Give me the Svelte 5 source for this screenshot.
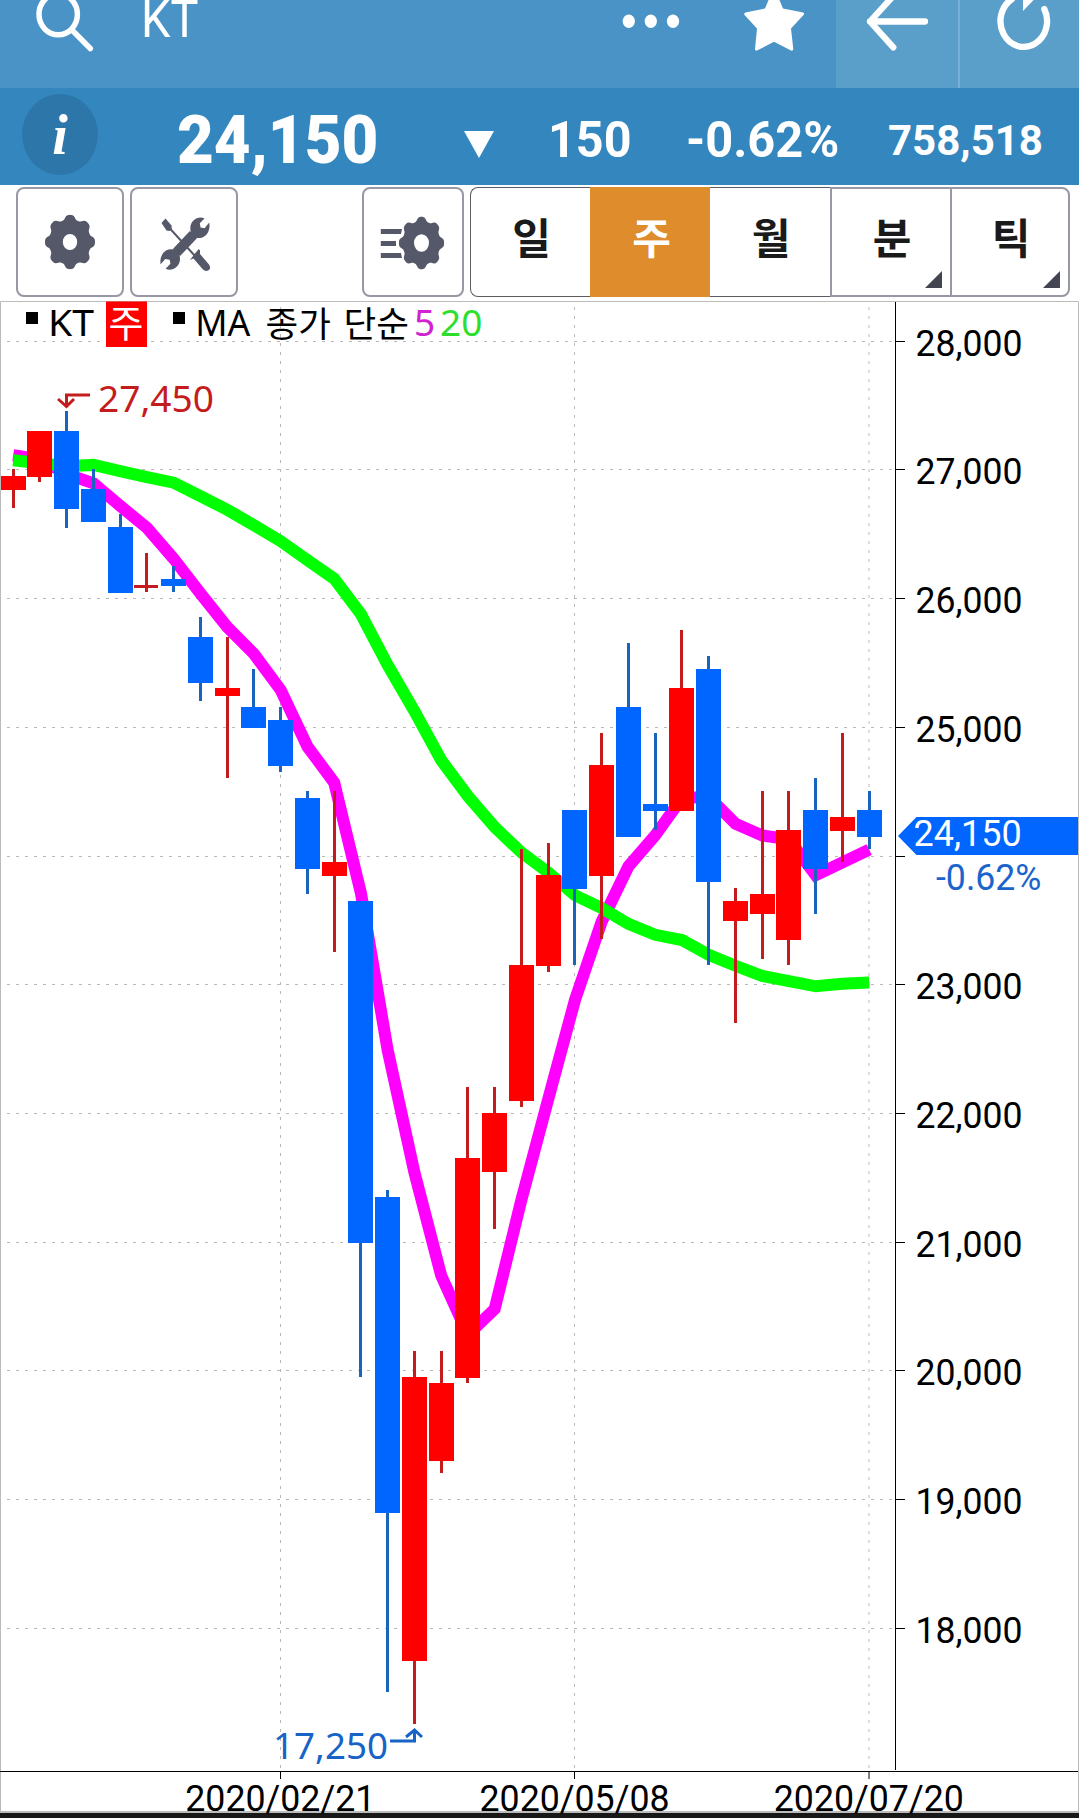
<script>
  // [open, high, low, close]
  const candles = [
    [26850, 27000, 26700, 26950],
    [26950, 27300, 26900, 27300],
    [27300, 27450, 26550, 26700],
    [26850, 27000, 26600, 26600],
    [26550, 26650, 26050, 26050],
    [26100, 26350, 26050, 26100],
    [26150, 26250, 26050, 26100],
    [25700, 25850, 25200, 25350],
    [25250, 25700, 24600, 25300],
    [25150, 25450, 25000, 25000],
    [25050, 25150, 24650, 24700],
    [24450, 24500, 23700, 23900],
    [23850, 24500, 23250, 23950],
    [23650, 23650, 19950, 21000],
    [21350, 21400, 17500, 18900],
    [17750, 20150, 17250, 19950],
    [19300, 20150, 19200, 19900],
    [19950, 22200, 19900, 21650],
    [21550, 22200, 21100, 22000],
    [22100, 24050, 22050, 23150],
    [23150, 24100, 23100, 23850],
    [24350, 24350, 23150, 23750],
    [23850, 24950, 23350, 24700],
    [25150, 25650, 24150, 24150],
    [24400, 24950, 24200, 24350],
    [24350, 25750, 24350, 25300],
    [25450, 25550, 23150, 23800],
    [23500, 23750, 22700, 23650],
    [23550, 24500, 23200, 23700],
    [23350, 24500, 23150, 24200],
    [24350, 24600, 23550, 23900],
    [24200, 24950, 23950, 24300],
    [24350, 24500, 24050, 24150],
  ];

  // averages that depend on weeks before the first visible candle
  const ma5Head = [27114, 27083, 26967, 26897];
  const ma20Head = [
    27075, 27052, 27029, 27039, 26990, 26943, 26901, 26796, 26691, 26570,
    26446, 26298, 26155, 25879, 25483, 25125, 24744, 24465, 24224,
  ];

  const prices = [28000, 27000, 26000, 25000, 24000, 23000, 22000, 21000, 20000, 19000, 18000];
  const dates = [
    { label: '2020/02/21', i: 10 },
    { label: '2020/05/08', i: 21 },
    { label: '2020/07/20', i: 32 },
  ];

  const tabs = [
    { name: '일' },
    { name: '주', active: true },
    { name: '월' },
    { name: '분', more: true },
    { name: '틱', more: true },
  ];

  const x = (i) => 13.2 + i * 26.75;
  const y = (p) => 341.2 + (28000 - p) * 0.1287;

  const average = (n, head) =>
    candles
      .map((_, i) => {
        if (i < head.length) return head[i];
        const part = candles.slice(i - n + 1, i + 1);
        return part.reduce((sum, c) => sum + c[3], 0) / n;
      })
      .map((p, i) => `${x(i)},${y(p).toFixed(1)}`)
      .join(' ');

  const ma5 = average(5, ma5Head);
  const ma20 = average(20, ma20Head);

  const bars = candles.map(([open, high, low, close], i) => {
    const top = Math.round(y(Math.max(open, close)) - 0.5);
    const bottom = Math.round(y(Math.min(open, close)) + 0.5);
    const left = Math.round(x(i) - 12.5);
    return {
      left,
      top,
      up: close >= open,
      doji: open === close,
      height: Math.max(3, bottom - top),
      high: Math.round(y(high) - 0.5),
      low: Math.round(y(low) - 0.3),
    };
  });

  function gear(cx, cy, rx, ry) {
    const pts = [];
    for (let a = 0; a < 360; a += 3) {
      const t = (a * Math.PI) / 180;
      const r = 0.915 + 0.085 * Math.tanh(1.6 * Math.cos(8 * t) + 0.2) / 0.947;
      pts.push(`${(cx + rx * r * Math.cos(t)).toFixed(2)} ${(cy + ry * r * Math.sin(t)).toFixed(2)}`);
    }
    return `M${pts.join('L')}Z`;
  }

  function hole(cx, cy, rx, ry) {
    return `M${cx - rx} ${cy}a${rx} ${ry} 0 1 0 ${rx * 2} 0a${rx} ${ry} 0 1 0 ${-rx * 2} 0Z`;
  }
</script>

<div class="app">
  <header>
    <svg class="search" viewBox="0 0 120 88" width="120" height="88">
      <ellipse cx="58.2" cy="14.3" rx="19.2" ry="20.5" />
      <path d="M73 31L90.3 48.5" />
    </svg>
    <h1>KT</h1>
    <svg class="actions" viewBox="600 0 236 88" width="236" height="88">
      <ellipse cx="628.8" cy="21.3" rx="6.1" ry="6.7" />
      <ellipse cx="650.8" cy="21.3" rx="6.1" ry="6.7" />
      <ellipse cx="673" cy="21.3" rx="6.1" ry="6.7" />
      <path
        d="M774 -13L783 8.5L803 12.5Q805 13.5 803.5 15L791 28.5L793.3 49Q793 51.5 790.5 50.3L774 41.8L757.5 50.3Q755 51.5 755 49L757 28.5L744.5 15Q743.5 13.5 745.5 12.5L765 8.5Z"
      />
    </svg>
    <div class="nav">
      <svg viewBox="836 0 122 88" width="122" height="88">
        <path d="M896 -7L870 21.5L893.3 47.3M870 21.5H925" />
      </svg>
      <svg viewBox="960 0 119 88" width="119" height="88">
        <path d="M1044.3 9A23.3 25.7 0 1 1 1012 -1" />
        <path class="solid" d="M1023 -4V11L1036 -2.5Z" />
      </svg>
    </div>
  </header>

  <div class="quote">
    <div class="info"><span>i</span></div>
    <strong class="price">24,150</strong>
    <svg class="down" viewBox="0 0 30 27" width="30" height="27"><path d="M0 0H30L15 27Z" /></svg>
    <span class="change">150</span>
    <span class="rate">-0.62%</span>
    <span class="volume">758,518</span>
  </div>

  <div class="toolbar">
    <button class="tool" aria-label="settings">
      <svg viewBox="16 187 108 110" width="108" height="110">
        <path fill-rule="evenodd" d={gear(70, 242, 25, 27.2) + hole(70, 242, 7.2, 8)} />
      </svg>
    </button>
    <button class="tool" aria-label="tools">
      <svg viewBox="130 187 108 110" width="108" height="110">
        <path d="M165.5 218.5L171.5 225.5L171.8 229.5L169.5 231L166.5 230.5L161.5 223Z" />
        <path class="shaft" d="M169 227.5L195 256" />
        <path d="M190 260L194.5 254L198.8 249L200 250.5L200 254L209 264.5Q211.5 268.5 208.5 270.2Q205.5 272 202.5 269L193.5 258.5Z" />
        <path class="wrench" d="M176.5 252.5L193.5 234.5" />
        <path d="M204.5 218.5C198 215.5 190.5 220.5 190.3 228C190 235 195 238.5 200 238C207 237.5 210.8 229.5 209.2 222.5L204.6 228.2L200.5 227.5L199.8 223.3Z" />
        <path d="M165.6 268.8C172 271.8 179.8 266.8 180 259.2C180.2 252 175.3 248.8 170.2 249.3C163.2 250 159.3 257.2 160.6 264.2L165.3 258.9L169.7 259.8L170.4 263.8Z" />
      </svg>
    </button>
    <button class="tool list" aria-label="indicators">
      <svg viewBox="362 187 102 110" width="102" height="110">
        <path d="M380.8 229H402L401 234H380.8ZM380.8 241H396V246H380.8ZM380.8 253H401L402 258H380.8Z" />
        <path fill-rule="evenodd" d={gear(421.5, 243, 22.6, 26.2) + hole(421.5, 243, 7.5, 8.7)} />
      </svg>
    </button>
    <div class="tabs">
      {#each tabs as { name, active, more }}
        <button class:active class:more>{name}</button>
      {/each}
    </div>
  </div>

  <svg class="chart" viewBox="0 301 1079 1510" width="1079" height="1510">
    <path class="frame" d="M0.5 1811V301.5H1078.5V1811" />

    <g class="grid">
      {#each prices as p}
        <path d="M7 {Math.floor(y(p)) + 0.5}H895" />
      {/each}
      {#each dates as { i }}
        {#if i === 32}
          <path class="last" d="M869 307V1771" />
        {:else}
          <path d="M{Math.floor(x(i)) + 0.5} 307V1771" />
        {/if}
      {/each}
    </g>

    <polyline class="ma ma5" points={ma5} />
    <polyline class="ma ma20" points={ma20} />

    {#each bars as b}
      <g class={b.up ? 'up' : 'down'}>
        <rect class="wick" x={b.left + 11} y={b.high} width="3" height={b.low - b.high} />
        <rect class:wick={b.doji} x={b.left} y={b.top} width={b.doji ? 24 : 25} height={b.height} />
      </g>
    {/each}

    <g class="mark high">
      <path d="M66.5 406V395H90M58 399L66.5 406.5L74 399" />
      <text x="98" y="412" textLength="116" lengthAdjust="spacingAndGlyphs">27,450</text>
    </g>
    <g class="mark low">
      <path d="M390 1741H414.5V1731M406 1737L414.5 1730L422 1737" />
      <text x="273" y="1758.5" textLength="115" lengthAdjust="spacingAndGlyphs">17,250</text>
    </g>

    <g class="axis">
      <path d="M895.5 302V1770M0 1771.5H1078" />
      {#each prices as p}
        {#if p !== 24000}
          <text x="915.5" y={Math.floor(y(p)) + 15} textLength="107" lengthAdjust="spacingAndGlyphs">{p.toLocaleString('en-US')}</text>
        {/if}
        <path d="M896 {Math.floor(y(p)) + 0.5}H905" />
      {/each}
      {#each dates as { label, i }}
        <path class:soft={i === 32} d="M{i === 32 ? 869 : Math.floor(x(i)) + 0.5} 1772V1779" />
        <text x={x(i) - 95.4} y="1810.7" textLength="190" lengthAdjust="spacingAndGlyphs">{label}</text>
      {/each}
    </g>

    <g class="last-price">
      <path d="M898 836L916.5 817H1078V855H916.5Z" />
      <text x="913.6" y="846" textLength="108" lengthAdjust="spacingAndGlyphs">24,150</text>
      <text class="pct" x="936" y="890" textLength="105.5" lengthAdjust="spacingAndGlyphs">-0.62%</text>
    </g>

    <g class="legend">
      <path d="M26 312H38V324H26ZM173 312H185V324H173Z" />
      <text x="48" y="336" textLength="46" lengthAdjust="spacingAndGlyphs">KT</text>
      <rect x="106" y="301.5" width="41" height="45.5" />
      <text class="period" x="108.5" y="336.5">주</text>
      <text x="195.3" y="336" textLength="55" lengthAdjust="spacingAndGlyphs">MA</text>
      <text class="ko" x="265.5" y="337">종가</text>
      <text class="ko" x="343.5" y="337">단순</text>
      <text class="five" x="414" y="336">5</text>
      <text class="twenty" x="440" y="336">20</text>
    </g>
  </svg>
  <footer></footer>
</div>

<style>
  :global(body) {
    margin: 0;
    background: #fff;
  }
  .app {
    width: 1079px;
    height: 1818px;
    overflow: hidden;
    font-family: Roboto, 'Noto Sans CJK KR', sans-serif;
  }
  svg {
    display: block;
  }

  header {
    display: flex;
    height: 88px;
    background: #4a93c6;
  }
  header svg {
    fill: #fff;
  }
  .search {
    fill: none;
    stroke: #fff;
    stroke-width: 5.5;
    stroke-linecap: round;
  }
  h1 {
    flex: 1;
    margin: 0;
    padding-left: 21px;
    font-size: 51px;
    font-weight: 400;
    line-height: 40px;
    color: #fff;
    transform: scaleX(0.92);
    transform-origin: 21px 0;
  }
  .nav {
    display: flex;
    gap: 2px;
    background: #78b1d8;
  }
  .nav svg {
    background: #5a9fca;
    fill: none;
    stroke: #fff;
    stroke-width: 6.3;
    stroke-linecap: round;
    stroke-linejoin: round;
  }
  .nav .solid {
    fill: #fff;
    stroke: none;
  }

  .quote {
    display: flex;
    align-items: center;
    height: 97px;
    background: #3487be;
    color: #fff;
    font-weight: 700;
    white-space: nowrap;
  }
  .quote > strong,
  .quote > span {
    box-sizing: border-box;
    padding-top: 7px;
    transform-origin: 0 0;
  }
  .info {
    display: flex;
    align-items: center;
    justify-content: center;
    width: 76px;
    height: 81px;
    margin: 0 79px 4px 22px;
    border-radius: 50%;
    background: #2d76a9;
    font: italic 700 56px/1 'Liberation Serif', serif;
  }
  .price {
    width: 287px;
    font-size: 66px;
    transform: scaleX(0.963);
  }
  .quote .down {
    margin: 15px 54px 0 0;
    fill: #fff;
  }
  .change {
    width: 138px;
    font-size: 50px;
    transform: scaleX(0.97);
  }
  .rate {
    width: 202px;
    font-size: 50px;
    transform: scaleX(0.975);
  }
  .volume {
    font-size: 42px;
  }

  .toolbar {
    display: flex;
    height: 110px;
    padding: 2px 9px 4px 16px;
  }
  button {
    padding: 0;
    border: 0;
    background: #fff;
    font: inherit;
  }
  .tool {
    box-sizing: border-box;
    width: 108px;
    height: 110px;
    margin-right: 6px;
    border: 2px solid #9698a3;
    border-radius: 8px;
  }
  .tool svg {
    margin: -2px;
    fill: #555868;
  }
  .tool.list {
    width: 102px;
    margin-left: 118px;
  }
  .shaft {
    stroke: #555868;
    stroke-width: 2;
  }
  .wrench {
    stroke: #555868;
    stroke-width: 10;
  }
  .tabs {
    display: flex;
    flex: 1;
  }
  .tabs button {
    position: relative;
    box-sizing: border-box;
    flex: none;
    width: 20%;
    height: 110px;
    padding: 0 0 13px 2px;
    border: 1px solid #5c5c62;
    border-right: 0;
    font: 700 42px/1 'Noto Sans CJK KR', sans-serif;
    color: #1a1a1a;
  }
  .tabs button:first-child {
    border-radius: 8px 0 0 8px;
  }
  .tabs button:last-child {
    border-right: 2px solid #9698a3;
    border-radius: 0 8px 8px 0;
  }
  .tabs .active {
    border-color: #df8c2d;
    background: #df8c2d;
    color: #fff;
  }
  .tabs .active + button {
    border-left: 0;
  }
  .tabs .more {
    border-color: #9698a3;
    border-width: 2px 0 2px 2px;
  }
  .tabs .more::after {
    content: '';
    position: absolute;
    right: 8px;
    bottom: 7px;
    width: 17px;
    height: 17px;
    background: #444552;
    clip-path: polygon(100% 0, 100% 100%, 0 100%);
  }

  .chart {
    overflow: visible;
  }
  .chart text {
    font-size: 36.5px;
  }
  .frame {
    fill: none;
    stroke: #bbb;
  }
  .grid path {
    fill: none;
    stroke: #b8b8b8;
    stroke-dasharray: 3 6;
  }
  .grid .last {
    stroke: #ddd;
    stroke-width: 2;
  }
  .ma {
    fill: none;
    stroke-width: 12;
  }
  .ma5 {
    stroke: #f0f;
  }
  .ma20 {
    stroke: #0f0;
  }
  .up {
    fill: #f00;
  }
  .up .wick {
    fill: #c41c1c;
  }
  .down {
    fill: #06f;
  }
  .down .wick {
    fill: #1b64bd;
  }
  .mark path {
    fill: none;
    stroke-width: 3;
  }
  .mark text {
    font-family: 'Noto Sans', sans-serif;
    font-size: 37px;
  }
  .high path {
    stroke: #c41c1c;
  }
  .high text {
    fill: #c41c1c;
  }
  .low path {
    stroke: #1763c6;
  }
  .low text {
    fill: #1763c6;
  }
  .axis path {
    stroke: #000;
  }
  .axis .soft {
    stroke: #808080;
    stroke-width: 2;
  }
  .last-price path {
    fill: #06f;
  }
  .last-price text {
    fill: #fff;
  }
  .last-price .pct {
    fill: #1b64cc;
  }
  .legend text {
    font-family: 'Noto Sans', 'Noto Sans CJK KR', sans-serif;
    font-size: 37px;
  }
  .legend rect {
    fill: #f00;
  }
  .legend .ko {
    font-family: 'Noto Sans CJK KR', sans-serif;
    font-size: 35.5px;
  }
  .legend .period {
    font-family: 'Noto Sans CJK KR', sans-serif;
    font-size: 38px;
    fill: #fff;
  }
  .legend .five {
    fill: #d022d0;
  }
  .legend .twenty {
    fill: #2cdf2c;
  }

  footer {
    height: 5px;
    border-top: 2px solid #bbb;
    background: #171817;
  }
</style>
